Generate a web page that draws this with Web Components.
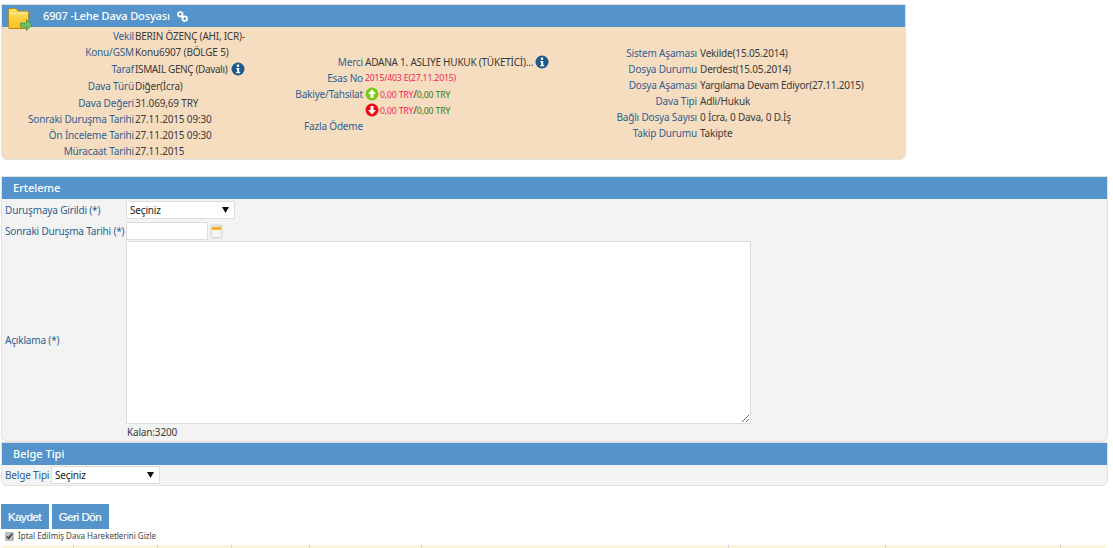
<!DOCTYPE html>
<html lang="tr">
<head>
<meta charset="utf-8">
<title>Dava Dosyası</title>
<style>
  html, body { margin: 0; height: 548px; overflow: hidden; background: #fff; }
  body { font: 10px/14px "Noto Sans", sans-serif; letter-spacing: -.17px; color: #3a3a3a; }
  .page { display: flex; flex-direction: column; padding: 4px 0 0 1px; }
  .case { width: 905px; margin-bottom: 16px; }
  .wide { width: 1107px; }
  .info { display: grid; grid-template-columns: 249px 340px 1fr; height: 132px; }
  .info > div { align-self: center; }
  .col-1 { --label-w: 132px; --gap: 1px; }
  .col-2 { --label-w: 112px; --gap: 2px; padding-top: 2px; }
  .col-3 { --label-w: 106px; --gap: 3px; }
  .red { color: #ee1d5b; font-size: 8.7px; }
  .green { color: #2c7a22; font-size: 8.7px; }
  .slash { color: #333; }
  .title { letter-spacing: -.12px; }
  .tight { letter-spacing: -.37px; }
  .snug { letter-spacing: -.23px; }
  .actions { display: flex; gap: 3px; margin-top: 18px; }
</style>
</head>
<body>

<template id="panel-tpl">
  <style>
    :host { display: block; box-sizing: border-box; border: 1px solid #e2e2e2; border-radius: 0 0 6px 6px; background: var(--panel-bg, #f3f3f3); }
    header { position: relative; display: flex; align-items: center; gap: 7px; height: 22px; padding-left: var(--title-x, 11px); background: #5494ca; color: #fff; font: 500 11px/22px "Noto Sans", sans-serif; letter-spacing: 0; }
    ::slotted([slot="over"]) { position: absolute; left: 6px; top: 2px; }
  </style>
  <header><slot name="over"></slot><slot name="title"></slot></header>
  <slot></slot>
</template>

<template id="row-tpl">
  <style>
    :host { display: grid; grid-template-columns: var(--label-w, 120px) 1fr; column-gap: var(--gap, 2px); align-items: center; height: 16px; white-space: nowrap; }
    :host([tall]) { height: 17px; }
    .label { text-align: right; color: #2f5f92; }
    .value { display: flex; align-items: center; gap: 2px; }
  </style>
  <span class="label"><slot name="label"></slot></span>
  <span class="value"><slot></slot></span>
</template>

<template id="field-tpl">
  <style>
    :host { display: grid; grid-template-columns: var(--field-label, 121px) 1fr; align-items: center; padding-left: 3px; white-space: nowrap; }
    .label { color: #2f5f92; }
    .control { display: flex; align-items: center; gap: 2px; }
  </style>
  <span class="label"><slot name="label"></slot></span>
  <span class="control"><slot></slot></span>
</template>

<template id="select-tpl">
  <style>
    :host { display: inline-block; position: relative; width: var(--w, 109px); height: 18px; }
    select { appearance: none; -webkit-appearance: none; box-sizing: border-box; width: 100%; height: 100%; margin: 0; padding: 0 0 0 3px; border: 1px solid #ddd; border-radius: 0; background: #fff; color: #222; font: 10px "Noto Sans", sans-serif; letter-spacing: -.17px; outline: none; }
    i { position: absolute; right: 6px; top: 6px; width: 7px; height: 6px; background: #111; clip-path: polygon(0 0, 100% 0, 50% 100%); pointer-events: none; }
  </style>
  <select><option>Seçiniz</option></select>
  <i></i>
</template>

<template id="button-tpl">
  <style>
    :host { display: inline-block; }
    button { display: block; width: var(--w, 48px); height: 25px; padding: 0 1px 0 0; border: 0; background: #5494ca; color: #fff; font: 11.5px "Liberation Sans", Arial, sans-serif; letter-spacing: -.45px; -webkit-text-stroke: .2px #fff; }
  </style>
  <button><slot></slot></button>
</template>

<template id="grid-tpl">
  <style>
    :host { display: grid; grid-template-columns: 72px 84px 74px 78px 112px 307px 157px 175px 45px; height: 20px; margin: 4px 0 0 1px; width: 1104px; background: #fdf5dc; }
    span { border-right: 1px solid #d6d6d6; }
    span:last-child { border: 0; }
  </style>
  <span></span><span></span><span></span><span></span><span></span><span></span><span></span><span></span><span></span>
</template>

<template id="check-tpl">
  <style>
    :host { display: flex; align-items: center; gap: 4px; height: 10px; margin: 2px 0 0 4px; color: #444; font-size: 8px; white-space: nowrap; letter-spacing: 0; }
    input { width: 9px; height: 9px; margin: 0; accent-color: #bbb; }
  </style>
  <input type="checkbox" checked><slot></slot>
</template>

<div class="page">
  <case-panel class="case" style="--panel-bg:#f7ddbf;--title-x:41px">
    <svg slot="over" width="25" height="25" viewBox="0 0 25 25">
      <defs>
        <linearGradient id="folder-fill" x1="0" y1="0" x2="0" y2="1">
          <stop offset="0" stop-color="#ffe16a"/>
          <stop offset="1" stop-color="#fcbf1c"/>
        </linearGradient>
      </defs>
      <path d="M.5 20.500V3a1.500 1.500 0 0 1 1.500-1.500h6l2 2.500h9a1.500 1.500 0 0 1 1.500 1.500v15A1 1 0 0 1 19.500 21.500h-18a1 1 0 0 1-1-1z" fill="url(#folder-fill)" stroke="#a98a2c"/>
      <path d="M1.500 6h18v1h-18z" fill="#fff2b0"/>
      <path d="M12.500 16h6v-3.500l5.500 5.500-5.500 5.500V20h-6z" fill="#6cbf68" stroke="#3f9441" stroke-width=".8"/>
    </svg>
    <span slot="title" class="title">6907 -Lehe Dava Dosyası</span>
    <svg slot="title" width="11" height="11" viewBox="0 0 12 12" fill="none" stroke="#fff" stroke-width="1.900">
      <circle cx="3.600" cy="3.600" r="2.500"/>
      <circle cx="8.400" cy="8.400" r="2.500"/>
      <path d="M4.500 4.500l3 3"/>
    </svg>
    <div class="info">
      <div class="col-1">
        <info-row><span slot="label">Vekil</span><span class="snug">BERIN ÖZENÇ (AHI, ICR)-</span></info-row>
        <info-row tall><span slot="label">Konu/GSM</span>Konu6907 (BÖLGE 5)</info-row>
        <info-row tall><span slot="label">Taraf</span><span class="tight">ISMAIL GENÇ (Davalı)</span><info-icon></info-icon></info-row>
        <info-row tall><span slot="label">Dava Türü</span>Diğer(İcra)</info-row>
        <info-row><span slot="label">Dava Değeri</span>31.069,69 TRY</info-row>
        <info-row><span slot="label">Sonraki Duruşma Tarihi</span>27.11.2015 09:30</info-row>
        <info-row><span slot="label">Ön İnceleme Tarihi</span>27.11.2015 09:30</info-row>
        <info-row><span slot="label">Müracaat Tarihi</span>27.11.2015</info-row>
      </div>
      <div class="col-2">
        <info-row><span slot="label">Merci</span><span class="snug">ADANA 1. ASLIYE HUKUK (TÜKETİCİ)...</span><info-icon style="margin-left:0"></info-icon></info-row>
        <info-row><span slot="label">Esas No</span><span class="red">2015/403 E(27.11.2015)</span></info-row>
        <info-row><span slot="label">Bakiye/Tahsilat</span><trend-icon></trend-icon><span><span class="red">0,00 TRY</span><span class="slash">/</span><span class="green">0,00 TRY</span></span></info-row>
        <info-row><span slot="label"></span><trend-icon down></trend-icon><span><span class="red">0,00 TRY</span><span class="slash">/</span><span class="green">0,00 TRY</span></span></info-row>
        <info-row><span slot="label">Fazla Ödeme</span></info-row>
      </div>
      <div class="col-3">
        <info-row><span slot="label">Sistem Aşaması</span>Vekilde(15.05.2014)</info-row>
        <info-row><span slot="label">Dosya Durumu</span>Derdest(15.05.2014)</info-row>
        <info-row><span slot="label">Dosya Aşaması</span><span class="snug">Yargılama Devam Ediyor(27.11.2015)</span></info-row>
        <info-row><span slot="label">Dava Tipi</span>Adli/Hukuk</info-row>
        <info-row><span slot="label">Bağlı Dosya Sayısı</span>0 İcra, 0 Dava, 0 D.İş</info-row>
        <info-row><span slot="label">Takip Durumu</span>Takipte</info-row>
      </div>
    </div>
  </case-panel>

  <case-panel class="wide">
    <span slot="title">Erteleme</span>
    <erteleme-form></erteleme-form>
  </case-panel>

  <case-panel class="wide">
    <span slot="title">Belge Tipi</span>
    <form-field style="--field-label:46px;padding-top:1px;padding-bottom:1px">
      <span slot="label">Belge Tipi</span>
      <pick-list></pick-list>
    </form-field>
  </case-panel>

  <div class="actions">
    <app-button>Kaydet</app-button>
    <app-button style="--w:57px">Geri Dön</app-button>
  </div>
  <check-line>İptal Edilmiş Dava Hareketlerini Gizle</check-line>
  <grid-head></grid-head>
</div>

<script>
  const fromTemplate = (id) => class extends HTMLElement {
    constructor() {
      super();
      const root = this.attachShadow({ mode: "open" });
      root.append(document.getElementById(id).content.cloneNode(true));
    }
  };

  customElements.define("case-panel", fromTemplate("panel-tpl"));
  customElements.define("info-row", fromTemplate("row-tpl"));
  customElements.define("form-field", fromTemplate("field-tpl"));
  customElements.define("pick-list", fromTemplate("select-tpl"));
  customElements.define("app-button", fromTemplate("button-tpl"));
  customElements.define("grid-head", fromTemplate("grid-tpl"));
  customElements.define("check-line", fromTemplate("check-tpl"));

  customElements.define("info-icon", class extends HTMLElement {
    constructor() {
      super();
      this.attachShadow({ mode: "open" }).innerHTML = `
        <style>:host { display: inline-flex; margin-left: 2px; } svg { width: 14px; height: 14px; }</style>
        <svg viewBox="0 0 14 14">
          <circle cx="7" cy="7" r="6.500" fill="#1c5a8e"/>
          <circle cx="7" cy="3.700" r="1.300" fill="#fff"/>
          <path d="M5.300 6h2.900v4h1v1.200H5.200V10h1V7.200h-.9z" fill="#fff"/>
        </svg>`;
    }
  });

  customElements.define("trend-icon", class extends HTMLElement {
    constructor() {
      super();
      const down = this.hasAttribute("down");
      this.attachShadow({ mode: "open" }).innerHTML = `
        <style>:host { display: inline-flex; margin-right: -1px; } svg { width: 14px; height: 14px; }</style>
        <svg viewBox="0 0 14 14">
          <circle cx="7" cy="7" r="6.500" fill="${down ? "#ee0a14" : "#76cc14"}"/>
          <path d="${down ? "M5.500 3h3v4h2.500L7 11.500 3 7h2.500z" : "M5.500 11h3V7h2.500L7 2.500 3 7h2.500z"}" fill="#fff"/>
        </svg>`;
    }
  });

  customElements.define("erteleme-form", class extends HTMLElement {
    constructor() {
      super();
      this.attachShadow({ mode: "open" }).innerHTML = `
        <style>
          :host { display: flex; flex-direction: column; padding-top: 2px; height: 242px; box-sizing: border-box; }
          form-field + form-field { margin-top: 3px; }
          form-field.area { margin-top: 1px; }
          input { box-sizing: border-box; width: 82px; height: 18px; margin: 0; border: 1px solid #ddd; background: #fff; }
          textarea { display: block; box-sizing: border-box; width: 625px; height: 183px; margin: 0; border: 1px solid #ddd; background: #fff; outline: none; }
          .remain { padding: 1px 0 0 1px; }
        </style>
        <form-field><span slot="label">Duruşmaya Girildi (*)</span><pick-list></pick-list></form-field>
        <form-field><span slot="label">Sonraki Duruşma Tarihi (*)</span><input type="text">
          <svg width="13" height="15" viewBox="0 0 13 15">
            <rect x=".5" y=".5" width="12" height="14" rx="1.500" fill="#dededb" stroke="#e4e4e2"/>
            <rect x="2" y="3" width="9" height="3" fill="#f3b02c"/>
            <rect x="2" y="6" width="9" height="7" fill="#f6f6f4"/>
          </svg>
        </form-field>
        <form-field class="area"><span slot="label">Açıklama (*)</span>
          <div>
            <textarea></textarea>
            <div class="remain">Kalan:3200</div>
          </div>
        </form-field>`;
    }
  });
</script>
</body>
</html>
